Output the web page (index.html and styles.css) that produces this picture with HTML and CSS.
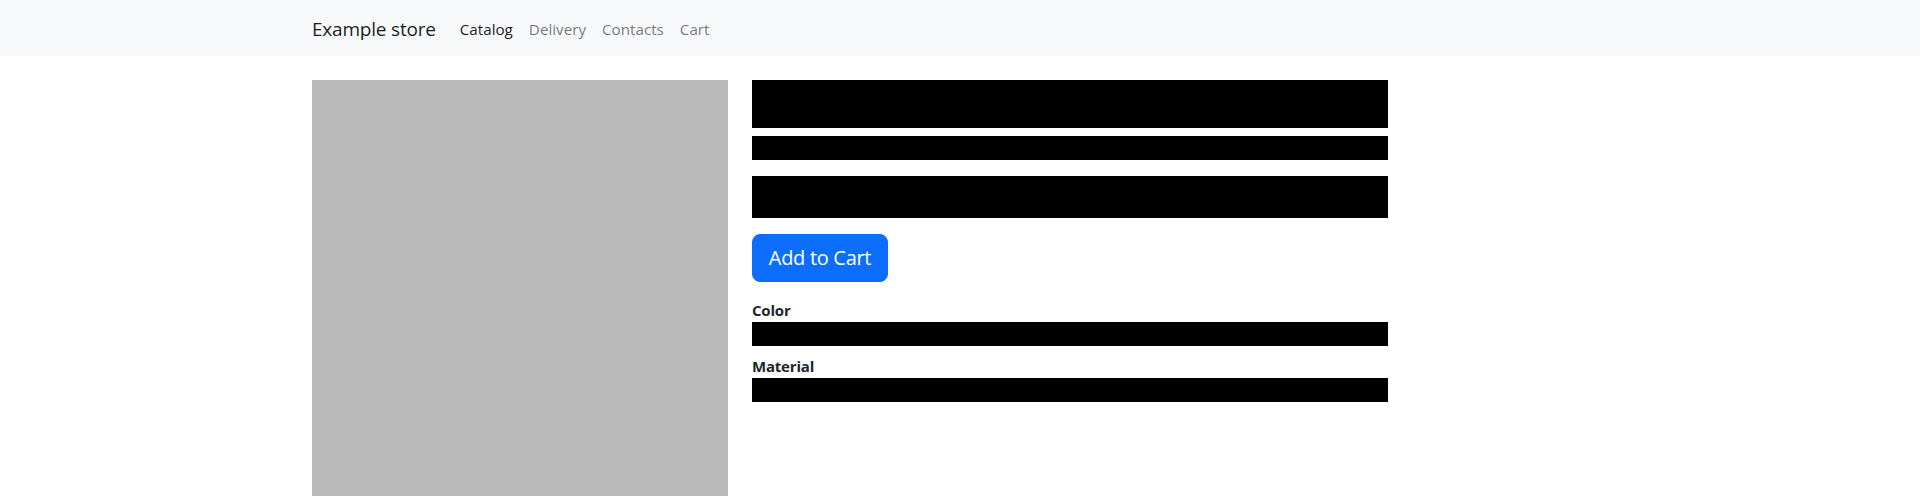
FILE: index.html
```html
<!DOCTYPE html>
<html lang="en">
<head>
<meta charset="utf-8">
<title>Example store</title>
<link rel="stylesheet" href="styles.css">
</head>
<body>
<nav class="navbar">
  <div class="container nav-inner">
    <a class="brand" href="#">Example store</a>
    <ul class="nav-links">
      <li><a class="nav-link active" href="#">Catalog</a></li>
      <li><a class="nav-link" href="#">Delivery</a></li>
      <li><a class="nav-link" href="#">Contacts</a></li>
      <li><a class="nav-link" href="#">Cart</a></li>
    </ul>
  </div>
</nav>
<main class="container product">
  <div class="product-image"></div>
  <div class="product-info">
    <div class="redact redact-title"></div>
    <div class="redact redact-sub"></div>
    <div class="redact redact-price"></div>
    <button class="btn-cart" type="button">Add to Cart</button>
    <dl class="props">
      <dt>Color</dt>
      <dd class="redact redact-line"></dd>
      <dt>Material</dt>
      <dd class="redact redact-line"></dd>
    </dl>
  </div>
</main>
</body>
</html>
```
FILE: styles.css
```css
* { box-sizing: border-box; }
html, body { margin: 0; padding: 0; }
body {
  font-family: "Open Sans", "Noto Sans", "Liberation Sans", sans-serif;
  font-size: 16px;
  line-height: 1.5;
  color: #212529;
  background: #fff;
}
.container {
  width: 1320px;
  margin: 0 auto;
  padding: 0 12px;
}
.navbar {
  background: #f8f9fa;
  height: 56px;
}
.nav-inner {
  display: flex;
  align-items: center;
  height: 56px;
  padding-top: 2px;
}
.brand {
  font-size: 19px;
  color: rgba(0,0,0,.9);
  text-decoration: none;
  margin-right: 16px;
  letter-spacing: -0.2px;
  line-height: 30px;
}
.nav-links {
  display: flex;
  list-style: none;
  margin: 0;
  padding: 0;
}
.nav-link {
  display: block;
  padding: 8px 8px;
  font-size: 15.2px;
  color: rgba(0,0,0,.55);
  text-decoration: none;
}
.nav-link.active { color: rgba(0,0,0,.9); }
.product {
  display: flex;
  align-items: flex-start;
  padding-top: 24px;
}
.product-image {
  width: 416px;
  height: 440px;
  background: #bababa;
  flex: none;
}
.product-info {
  width: 636px;
  margin-left: 24px;
  display: flex;
  flex-direction: column;
  align-items: flex-start;
}
.redact { background: #000; width: 636px; }
.redact-title { height: 48px; margin-bottom: 8px; }
.redact-sub { height: 24px; margin-bottom: 16px; }
.redact-price { height: 42px; margin-bottom: 16px; }
.btn-cart {
  font-family: inherit;
  font-size: 20px;
  line-height: 30px;
  height: 48px;
  width: 136px;
  padding: 0;
  text-align: center;
  color: #fff;
  background: #0d6efd;
  border: 1px solid #0d6efd;
  border-radius: 8px;
  letter-spacing: -0.3px;
  margin-bottom: 16px;
}
.props { margin: 0; width: 636px; }
.props dt {
  font-weight: 700;
  font-size: 15px;
  line-height: 24px;
  letter-spacing: -0.2px;
}
.props dd { margin: 0 0 8px 0; height: 24px; }
```
